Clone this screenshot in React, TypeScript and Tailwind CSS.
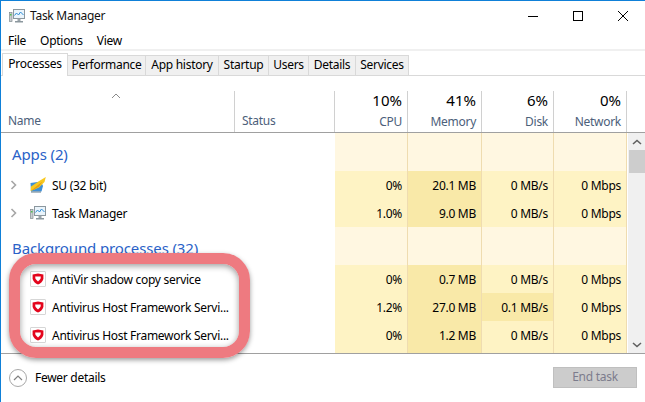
import React from "react";

const L = "bg-[#fff7e1]";
const M = "bg-[#fef3c4]";
const D = "bg-[#f9e9a8]";

function TmIcon({ className = "" }: { className?: string }) {
  return (
    <svg viewBox="0 0 16 16" className={className}>
      <rect x="0.5" y="4.5" width="2.5" height="9" fill="#c9cdd0" stroke="#7f8a8f" strokeWidth="0.7" />
      <rect x="1" y="6" width="1.5" height="1.5" fill="#4fbf4f" />
      <rect x="4.5" y="1.5" width="11" height="9" fill="#eaf4fb" stroke="#8b979e" />
      <path d="M5.5 7.5 L7.5 5 L9.5 7 L11.5 4 L14.5 7" fill="none" stroke="#2f8fd8" strokeWidth="1" />
      <rect x="8.5" y="10.5" width="3" height="2.5" fill="#9aa4aa" />
      <rect x="6" y="13" width="8" height="1.5" fill="#8b979e" />
    </svg>
  );
}

function SuIcon() {
  return (
    <svg viewBox="0 0 16 16" className="w-4 h-4">
      <path d="M0.5 6 L11 4.5 L13 9 L11.5 14.5 L1 14.5 Z" fill="#3f8fd6" />
      <path d="M0.5 14 L1 9.5 L10 3.5 L15.8 0 L14.5 5 L9 10.5 L3.5 13 Z" fill="#f8c81f" />
      <path d="M2 13 L8 8 L12.5 4.5 L9 9.5 L3.5 13 Z" fill="#e79c14" />
      <path d="M1 15 L11 15" stroke="#7d8f9b" strokeWidth="1.2" />
    </svg>
  );
}

function ShieldIcon() {
  return (
    <div className="w-[16px] h-[16px] border border-[#d6d6d6] rounded-[1px] bg-white flex items-center justify-center">
      <svg viewBox="0 0 12 12" className="w-[12px] h-[12px]">
        <path d="M0.6 1.4 L6 0.6 L11.4 1.4 L11.4 6 C10.8 8.6 8.2 10.6 6 11.6 C3.8 10.6 1.2 8.6 0.6 6 Z" fill="#e3051c" />
        <path d="M3.2 3.6 L8.8 3.6 L8.6 5.6 C8.2 6.8 7 7.8 6 8.4 C5 7.8 3.8 6.8 3.4 5.6 Z" fill="#ffffff" />
      </svg>
    </div>
  );
}

function Chevron() {
  return (
    <svg viewBox="0 0 8 10" className="w-[8px] h-[10px]">
      <path d="M1.5 1 L5.5 5 L1.5 9" fill="none" stroke="#a6a6a6" strokeWidth="1.6" />
    </svg>
  );
}

const Cell = ({ bg, children, extra = "" }: { bg: string; children?: React.ReactNode; extra?: string }) => (
  <div className={`${bg} border-r border-[#efdcb0] pr-[5px] text-right ${extra}`}>{children}</div>
);

type RowProps = {
  icon: React.ReactNode;
  name: string;
  chevron?: boolean;
  cpu: string;
  mem: string;
  disk: string;
  net: string;
  diskBg?: string;
  tall?: boolean;
};

function Row({ icon, name, chevron, cpu, mem, disk, net, diskBg = M, tall }: RowProps) {
  const h = tall ? "h-[32px] pt-[6px]" : "h-[28px] pt-[6px]";
  return (
    <div className="grid grid-cols-[234px_100px_73px_74px_72px_73px] text-[12px] leading-[16px] text-black">
      <div className={`${h} flex items-start`}>
        <div className="w-[29px] pl-[9px] pt-[3px] h-[16px]">{chevron && <Chevron />}</div>
        <div className="w-[22px]">{icon}</div>
        <div className="whitespace-nowrap w-[180px] pt-[1px]">{name}</div>
      </div>
      <div className={h} />
      <Cell bg={M} extra={h}><div className="pt-[1px]">{cpu}</div></Cell>
      <Cell bg={D} extra={h}><div className="pt-[1px]">{mem}</div></Cell>
      <Cell bg={diskBg} extra={h}><div className="pt-[1px]">{disk}</div></Cell>
      <Cell bg={M} extra={h}><div className="pt-[1px]">{net}</div></Cell>
    </div>
  );
}

function Section({ title, pt }: { title: string; pt: string }) {
  return (
    <div className="grid grid-cols-[234px_100px_73px_74px_72px_73px] h-[38px]">
      <div className={`pl-[11px] text-[15px] leading-[20px] text-[#2a62c8] whitespace-nowrap tracking-[-0.12px] ${pt}`}>{title}</div>
      <div />
      <Cell bg={L} />
      <Cell bg={L} />
      <Cell bg={L} />
      <Cell bg={L} />
    </div>
  );
}

function HeadCol({ pct, label }: { pct: string; label: string }) {
  return (
    <div className="border-r border-[#d0d0d0] pr-[5px] text-right">
      <div className="text-[15px] leading-[20px] text-black mt-[-1px] tracking-normal">{pct}</div>
      <div className="text-[12px] leading-[16px] text-[#4c607a] mt-[4px]">{label}</div>
    </div>
  );
}

const tabs: [string, string][] = [
  ["Performance", "w-[78px]"],
  ["App history", "w-[73px]"],
  ["Startup", "w-[50px]"],
  ["Users", "w-[40px]"],
  ["Details", "w-[47px]"],
  ["Services", "w-[53px]"],
];

export default function App() {
  return (
    <div
      className="relative w-[645px] h-[402px] overflow-hidden bg-white border-t border-l border-[#0f80d8] text-black tracking-[-0.28px]"
      style={{ fontFamily: '"Noto Sans", sans-serif' }}
    >
      {/* Title bar */}
      <div className="h-[29px] flex items-center relative">
        <TmIcon className="w-4 h-4 ml-[8px] mt-[1px]" />
        <div className="ml-[5px] text-[12px] leading-[16px] text-[#111]">Task Manager</div>
        <div className="ml-auto flex items-center pr-[17px] gap-[35px]">
          <svg width="10" height="10" viewBox="0 0 10 10"><path d="M0 5.5 H10" stroke="#000" strokeWidth="1" /></svg>
          <svg width="10" height="10" viewBox="0 0 10 10"><rect x="0.5" y="0.5" width="9" height="9" fill="none" stroke="#000" /></svg>
          <svg width="10" height="10" viewBox="0 0 10 10"><path d="M0 0 L10 10 M10 0 L0 10" stroke="#000" strokeWidth="1" /></svg>
        </div>
      </div>

      {/* Menu */}
      <div className="h-[19px] flex items-center pl-[7px] gap-[14px] text-[12px] leading-[16px] pt-[3px]">
        <span>File</span>
        <span>Options</span>
        <span>View</span>
      </div>
      <div className="h-[2px] bg-[#f0f0f0]" />

      {/* Tabs */}
      <div className="h-[25px] border-b border-[#d9d9d9] flex items-end pl-[1px] text-[12px] leading-[16px]">
        <div className="w-[66px] h-[23px] bg-white border border-b-0 border-[#d9d9d9] -mb-px text-center pt-[2px] z-10">Processes</div>
        {tabs.map(([t, w]) => (
          <div key={t} className={`${w} h-[20px] bg-[#f0f0f0] border-t border-r border-[#d9d9d9] text-center pt-[1px] whitespace-nowrap`}>{t}</div>
        ))}
      </div>

      {/* Header */}
      <div className="h-[57px] border-b border-[#a0a0a0] relative">
        <svg width="10" height="6" viewBox="0 0 10 6" className="absolute left-[110px] top-[17px]">
          <path d="M1 5 L5 1 L9 5" fill="none" stroke="#8a8a8a" strokeWidth="1" />
        </svg>
        <div className="grid grid-cols-[234px_100px_73px_74px_72px_73px] pt-[15px] h-[56px]">
          <div className="border-r border-[#d0d0d0] pl-[7px] pt-[22px] text-[12px] leading-[16px] text-[#4c607a]">Name</div>
          <div className="border-r border-[#d0d0d0] pl-[7px] pt-[22px] text-[12px] leading-[16px] text-[#4c607a]">Status</div>
          <HeadCol pct="10%" label="CPU" />
          <HeadCol pct="41%" label="Memory" />
          <HeadCol pct="6%" label="Disk" />
          <HeadCol pct="0%" label="Network" />
        </div>
      </div>

      {/* Body */}
      <div className="h-[220px] flex">
        <div className="w-[627px] overflow-hidden">
          <Section title="Apps (2)" pt="pt-[11px]" />
          <Row chevron icon={<SuIcon />} name="SU (32 bit)" cpu="0%" mem="20.1 MB" disk="0 MB/s" net="0 Mbps" />
          <Row chevron icon={<TmIcon className="w-4 h-4" />} name="Task Manager" cpu="1.0%" mem="9.0 MB" disk="0 MB/s" net="0 Mbps" />
          <Section title="Background processes (32)" pt="pt-[11px]" />
          <Row icon={<ShieldIcon />} name="AntiVir shadow copy service" cpu="0%" mem="0.7 MB" disk="0 MB/s" net="0 Mbps" />
          <Row icon={<ShieldIcon />} name="Antivirus Host Framework Servi..." cpu="1.2%" mem="27.0 MB" disk="0.1 MB/s" diskBg={D} net="0 Mbps" />
          <Row tall icon={<ShieldIcon />} name="Antivirus Host Framework Servi..." cpu="0%" mem="1.2 MB" disk="0 MB/s" net="0 Mbps" />
        </div>
        <div className="w-[17px] bg-[#f0f0f0] flex flex-col items-center">
          <svg width="10" height="6" viewBox="0 0 10 6" className="mt-[6px]"><path d="M1 5 L5 1.5 L9 5" fill="none" stroke="#606060" strokeWidth="1.6" /></svg>
          <div className="w-[16px] h-[23px] bg-[#cdcdcd] mt-[5px]" />
          <svg width="10" height="6" viewBox="0 0 10 6" className="mt-auto mb-[5px]"><path d="M1 1 L5 4.5 L9 1" fill="none" stroke="#606060" strokeWidth="1.6" /></svg>
        </div>
      </div>

      {/* Footer */}
      <div className="h-[48px] border-t border-[#a0a0a0] flex items-start relative">
        <div className="w-[18px] h-[18px] ml-[8px] mt-[15px] rounded-full border border-[#a8a8a8] flex items-center justify-center">
          <svg width="10" height="6" viewBox="0 0 10 6"><path d="M1 5 L5 1 L9 5" fill="none" stroke="#808080" strokeWidth="1.2" /></svg>
        </div>
        <div className="ml-[8px] mt-[16px] text-[12px] leading-[16px]">Fewer details</div>
        <div className="ml-auto mr-[8px] mt-[13px] w-[84px] h-[21px] bg-[#cccccc] border border-[#bfbfbf] text-center text-[12px] leading-[18px] text-[#7c7c8c]">End task</div>
      </div>

      {/* Annotation */}
      <div className="absolute left-[8px] top-[252px] w-[241px] h-[105px] rounded-[27px] border-[11px] border-[#ee7a80] shadow-[0_2px_5px_rgba(0,0,0,0.4),inset_0_2px_6px_rgba(0,0,0,0.4)]" />
    </div>
  );
}
